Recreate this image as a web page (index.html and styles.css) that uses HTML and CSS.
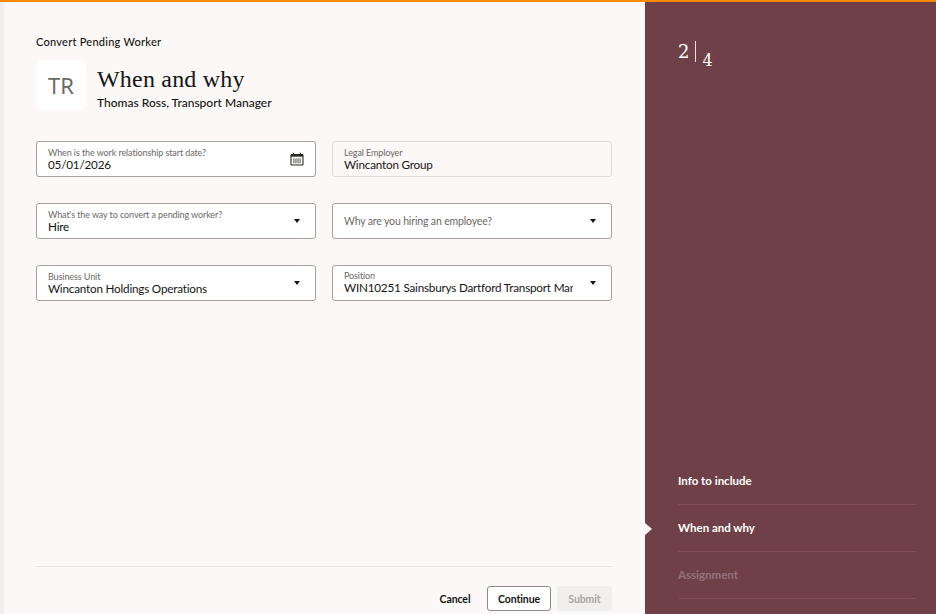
FILE: index.html
```html
<!DOCTYPE html>
<html lang="en">
<head>
<meta charset="utf-8">
<title>Convert Pending Worker</title>
<link rel="stylesheet" href="styles.css">
</head>
<body>
<div class="topbar"></div>
<div class="page">
  <div class="strip"></div>
  <main class="main">
    <div class="crumb">Convert Pending Worker</div>
    <header class="head">
      <div class="avatar">TR</div>
      <div class="head-text">
        <h1 class="title">When and why</h1>
        <div class="subtitle">Thomas Ross, Transport Manager</div>
      </div>
    </header>
    <section class="form">
      <div class="field">
        <div class="field-body">
          <div class="label">When is the work relationship start date?</div>
          <div class="value">05/01/2026</div>
        </div>
        <svg class="cal" width="14" height="14" viewBox="0 0 14 14" aria-hidden="true">
          <rect x="1" y="2.5" width="12" height="10.5" rx="0.8" fill="#fff" stroke="#2c2a28" stroke-width="1.1"/>
          <rect x="1" y="2.5" width="12" height="2.2" fill="#2c2a28"/>
          <path d="M3.5 0.8v3M10.5 0.8v3" stroke="#2c2a28" stroke-width="1.1"/>
          <path d="M3 6.5h8v4.8H3z" fill="#8d8a87"/>
          <path d="M4.5 6.5v4.8M6.2 6.5v4.8M7.9 6.5v4.8M9.6 6.5v4.8" stroke="#e4e2e0" stroke-width="0.6"/>
        </svg>
      </div>
      <div class="field readonly">
        <div class="field-body">
          <div class="label">Legal Employer</div>
          <div class="value">Wincanton Group</div>
        </div>
      </div>
      <div class="field">
        <div class="field-body">
          <div class="label">What's the way to convert a pending worker?</div>
          <div class="value">Hire</div>
        </div>
        <span class="caret"></span>
      </div>
      <div class="field">
        <div class="field-body">
          <div class="placeholder">Why are you hiring an employee?</div>
        </div>
        <span class="caret"></span>
      </div>
      <div class="field">
        <div class="field-body">
          <div class="label">Business Unit</div>
          <div class="value">Wincanton Holdings Operations</div>
        </div>
        <span class="caret"></span>
      </div>
      <div class="field">
        <div class="field-body">
          <div class="label">Position</div>
          <div class="value clip">WIN10251 Sainsburys Dartford Transport Manager</div>
        </div>
        <span class="caret"></span>
      </div>
    </section>
    <footer class="footer">
      <button class="btn ghost" type="button">Cancel</button>
      <button class="btn outline" type="button">Continue</button>
      <button class="btn disabled" type="button">Submit</button>
    </footer>
  </main>
  <aside class="side">
    <div class="counter"><span class="cur">2</span><span class="sep"></span><span class="tot">4</span></div>
    <nav class="steps">
      <div class="step">Info to include</div>
      <div class="step active">When and why</div>
      <div class="step muted">Assignment</div>
    </nav>
  </aside>
</div>
</body>
</html>
```
FILE: styles.css
```css
* { box-sizing: border-box; }
html, body { margin: 0; height: 100%; overflow: hidden; }
body {
  font-family: Lato, "Noto Sans", sans-serif;
  color: #161513;
  background: #fcf8f7;
  display: flex;
  flex-direction: column;
  width: 936px;
  height: 614px;
}
.topbar { height: 2px; background: #ff8a00; flex: none; }
.page { flex: 1; display: flex; min-height: 0; }
.strip { width: 4px; background: #f1efed; flex: none; }
.main {
  flex: 1;
  display: flex;
  flex-direction: column;
  padding: 32px 33px 0 32px;
  min-width: 0;
}
.crumb { font-size: 11px; line-height: 16px; font-weight: 500; letter-spacing: 0.25px; }
.head { display: flex; gap: 11px; margin-top: 10px; height: 50px; }
.avatar {
  width: 50px; height: 50px;
  background: #fff;
  border-radius: 6px;
  color: #6b6967;
  font-family: "Noto Sans", sans-serif;
  font-size: 22px;
  display: flex; align-items: center; justify-content: center;
}
.head-text { display: flex; flex-direction: column; }
.title {
  margin: 6px 0 0;
  font-family: "Liberation Serif", serif;
  font-weight: 400;
  font-size: 24px;
  line-height: 26px;
  letter-spacing: 0.2px;
}
.subtitle { font-size: 12px; line-height: 16px; margin-top: 3px; font-weight: 500; }
.form {
  display: grid;
  grid-template-columns: 280px 280px;
  grid-auto-rows: 36px;
  column-gap: 16px;
  row-gap: 26px;
  margin-top: 31px;
}
.field {
  display: flex;
  align-items: center;
  padding: 0 11px;
  background: #fff;
  border: 1px solid #a5a19c;
  border-radius: 3px;
}
.field.readonly { background: #fcf8f7; border-color: #dfdbd8; }
.field-body { flex: 1; min-width: 0; padding-bottom: 1px; }
.label { font-size: 9px; line-height: 10px; color: #6b6967; letter-spacing: -0.1px; }
.value { font-size: 11.7px; line-height: 12px; color: #161513; white-space: nowrap; letter-spacing: -0.2px; }
.value.clip { overflow: hidden; width: 229px; height: 13px; }
.placeholder { font-size: 10.5px; line-height: 14px; color: #6b6967; letter-spacing: -0.15px; }
.cal { flex: none; }
.caret {
  flex: none;
  width: 0; height: 0;
  margin: 0 4.5px 0 7px;
  border-left: 3.5px solid transparent;
  border-right: 3.5px solid transparent;
  border-top: 4px solid #161513;
}
.footer {
  margin-top: auto;
  border-top: 1px solid #e6e2df;
  height: 48px;
  display: flex;
  justify-content: flex-end;
  align-items: flex-start;
  padding-top: 19px;
  gap: 6px;
}
.btn {
  font-family: Lato, "Noto Sans", sans-serif;
  font-size: 10.5px;
  font-weight: 700;
  letter-spacing: -0.1px;
  height: 25px;
  padding: 0;
  border-radius: 3px;
  background: transparent;
  border: 1px solid transparent;
  color: #161513;
}
.btn.ghost { width: 50px; padding-right: 2px; }
.btn.outline { width: 64px; border-color: #8d8a87; background: #fff; }
.btn.disabled { width: 55px; background: #f1efed; color: #a8a5a2; }
.side {
  width: 291px;
  flex: none;
  background: #6f4048;
  display: flex;
  flex-direction: column;
  justify-content: space-between;
  padding-left: 33px;
  padding-right: 20px;
  color: #fff;
}
.counter {
  display: flex;
  align-items: flex-start;
  font-family: "DejaVu Serif", serif;
  font-size: 18px;
  margin-top: 39px;
  height: 26px;
}
.cur { line-height: 22px; }
.sep { width: 1px; height: 21px; background: #e8dfe0; margin: 0 6px 0 6px; }
.tot { font-size: 16px; line-height: 20px; margin-top: 10px; }
.steps { display: flex; flex-direction: column; margin-bottom: 15px; }
.step {
  position: relative;
  height: 47px;
  display: flex;
  align-items: center;
  padding-bottom: 2px;
  font-size: 11.5px;
  font-weight: 700;
  border-bottom: 1px solid #814f58;
}
.step.muted { color: #95727a; }
.step.active::before {
  content: "";
  position: absolute;
  left: -33px;
  top: 18px;
  border-left: 7px solid #fcf8f7;
  border-top: 6px solid transparent;
  border-bottom: 6px solid transparent;
}
```
